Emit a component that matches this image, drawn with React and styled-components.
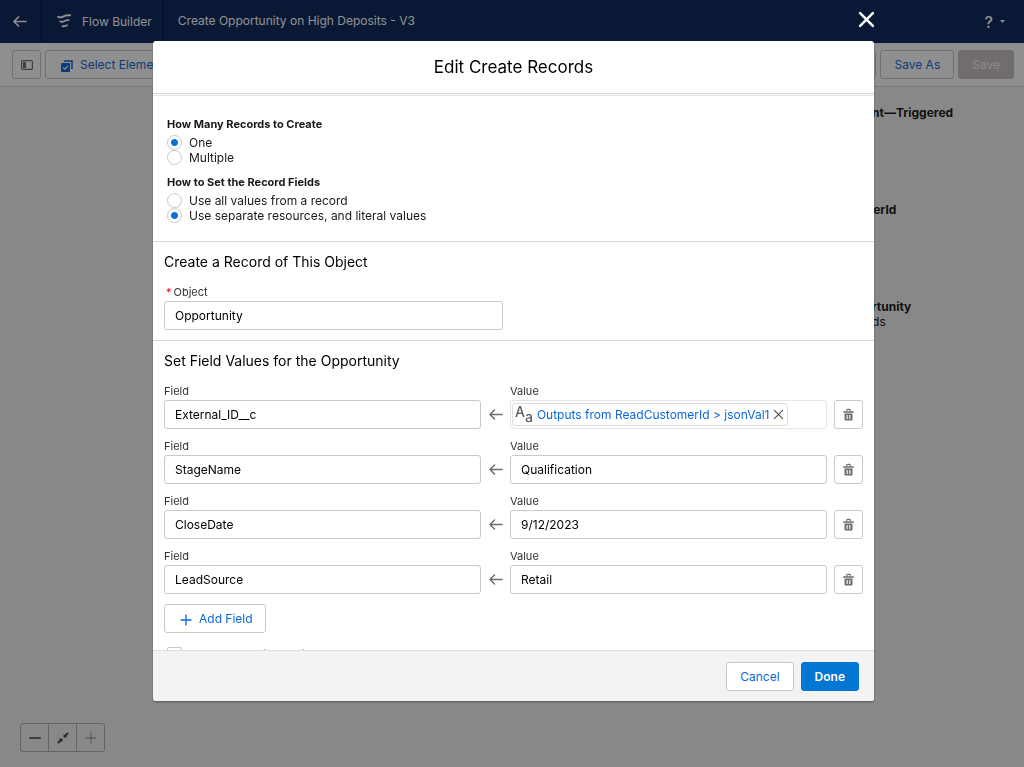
import { useState } from 'react';
import styled, { createGlobalStyle } from 'styled-components';

const GlobalStyle = createGlobalStyle`
  *, *::before, *::after {
    box-sizing: border-box;
  }

  body {
    margin: 0;
    font-family: Inter, 'Liberation Sans', sans-serif;
    font-size: 12px;
    color: #181818;
  }

  button, input {
    font: inherit;
    color: inherit;
  }
`;

const Page = styled.div`
  display: flex;
  flex-direction: column;
  height: 100vh;
  min-height: 480px;
  background-color: #f3f3f3;
`;

const TopBar = styled.header`
  display: flex;
  align-items: stretch;
  height: 43px;
  flex-shrink: 0;
  background-color: #0a285c;
  color: #ffffff;
  line-height: 42px;
`;

const BackLink = styled.a`
  display: flex;
  align-items: center;
  justify-content: center;
  width: 42px;
  padding-right: 2px;
  color: inherit;
  border-right: 1px solid #04112e;
`;

const Brand = styled.div`
  display: flex;
  align-items: center;
  gap: 10px;
  padding: 0 11px 0 15px;
  border-right: 1px solid #04112e;
`;

const FlowName = styled.h1`
  flex: 1;
  margin: 0;
  padding-left: 14px;
  font-size: 12px;
  font-weight: 400;
`;

const HelpButton = styled.button`
  display: flex;
  align-items: center;
  gap: 7px;
  margin-right: 19px;
  padding: 0;
  border: none;
  background: none;
  font-size: 16px;
  font-weight: 500;
`;

const Toolbar = styled.div`
  display: flex;
  align-items: center;
  gap: 4px;
  height: 44px;
  flex-shrink: 0;
  padding: 0 10px 0 12px;
  background-color: #ffffff;
  border-bottom: 1px solid #d8d8d8;
`;

const Spacer = styled.div`
  flex: 1;
`;

const Button = styled.button`
  display: inline-flex;
  align-items: center;
  justify-content: center;
  gap: 7px;
  height: 29px;
  padding: ${({ $withIcon }) => ($withIcon ? '0 12px 0 15px' : '0 13px')};
  border: 1px solid ${({ $brand }) => ($brand ? '#0176d3' : '#c9c9c9')};
  border-radius: 3px;
  background-color: ${({ $brand }) => ($brand ? '#0176d3' : '#ffffff')};
  color: ${({ $brand }) => ($brand ? '#ffffff' : '#0b68d8')};
  font-weight: ${({ $brand }) => ($brand ? 600 : 400)};
  white-space: nowrap;
  cursor: pointer;

  &:disabled {
    border-color: #c9c2c2;
    background-color: #c9c2c2;
    color: #f3f3f3;
    cursor: default;
  }
`;

const IconButton = styled.button`
  display: inline-flex;
  align-items: center;
  justify-content: center;
  width: 29px;
  height: 29px;
  padding: 0;
  border: 1px solid #c9c9c9;
  border-radius: 3px;
  background-color: #ffffff;
  color: #706e6b;
  cursor: pointer;
`;

const Canvas = styled.main`
  position: relative;
  flex: 1;
  overflow: hidden;
`;

const FlowNode = styled.div`
  position: absolute;
  left: 798px;
  top: ${({ $y }) => $y}px;
  line-height: 15px;
  white-space: nowrap;

  strong {
    display: block;
    font-weight: 700;
  }
`;

const ZoomControls = styled.div`
  position: absolute;
  left: 20px;
  bottom: 15px;
  display: flex;
  border: 1px solid #b0b0b0;
  border-radius: 3px;
`;

const ZoomButton = styled.button`
  display: flex;
  align-items: center;
  justify-content: center;
  width: 27px;
  height: 27px;
  padding: 0;
  border: none;
  background: none;
  color: #444444;

  & + & {
    width: 28px;
    border-left: 1px solid #b0b0b0;
  }

  &:disabled {
    color: #a8a8a8;
  }
`;

const Backdrop = styled.div`
  position: fixed;
  inset: 0;
  display: flex;
  padding: 41px 150px 66px 153px;
  background-color: rgba(8, 7, 7, 0.45);
`;

const Modal = styled.section`
  position: relative;
  display: flex;
  flex-direction: column;
  flex: 1;
  min-width: 0;
  border-radius: 3px;
  background-color: #ffffff;
  box-shadow: 0 1px 2px rgba(0, 0, 0, 0.4);
`;

const CloseButton = styled.button`
  position: absolute;
  top: -30px;
  right: -1px;
  display: flex;
  padding: 0;
  border: none;
  background: none;
  color: #ffffff;
  cursor: pointer;
`;

const ModalHeader = styled.header`
  flex-shrink: 0;
  padding: 14px 16px;
  border-bottom: 1px solid #d0d0d0;
  text-align: center;
`;

const ModalTitle = styled.h2`
  margin: 0;
  color: #000000;
  font-size: 17px;
  line-height: 24px;
  font-weight: 400;
`;

const ModalBody = styled.div`
  flex: 1;
  min-height: 0;
  margin-top: 1px;
  border-top: 1px solid #e5e5e5;
  overflow-y: auto;
  scrollbar-width: none;
`;

const ModalFooter = styled.footer`
  display: flex;
  justify-content: flex-end;
  gap: 7px;
  flex-shrink: 0;
  padding: 11px 15px 10px;
  border-top: 1px solid #dddddd;
  border-radius: 0 0 3px 3px;
  background-color: #f3f3f3;
`;

const Options = styled.div`
  display: flex;
  flex-direction: column;
  gap: 9px;
  padding: 20px 14px 18px;
`;

const RadioGroup = styled.fieldset`
  margin: 0;
  padding: 0;
  border: none;

  legend {
    margin-bottom: 3px;
    padding: 0;
    line-height: 16px;
    font-size: 11px;
    font-weight: 700;
  }
`;

const RadioLabel = styled.label`
  display: flex;
  align-items: center;
  gap: 7px;
  height: 15px;
`;

const Radio = styled.input`
  appearance: none;
  width: 15px;
  height: 15px;
  margin: 0;
  border: 1px solid #c9c9c9;
  border-radius: 50%;
  background-color: #ffffff;

  &:checked {
    background-image: radial-gradient(circle, #0b70d8 0 3px, transparent 4px);
  }
`;

const Section = styled.section`
  padding: 10px 11px;
  border-top: 1px solid #d8d8d8;
`;

const SectionTitle = styled.h3`
  margin: 0 0 12px;
  color: #000000;
  font-size: 14px;
  line-height: 20px;
  font-weight: 400;
`;

const Field = styled.div`
  min-width: 0;
  width: ${({ $width }) => $width || 'auto'};
`;

const FieldLabel = styled.label`
  display: block;
  font-size: 11px;
  line-height: 17px;
  color: #333333;
`;

const Required = styled.abbr`
  margin: 0 2px;
  color: #ea001e;
`;

const TextInput = styled.input`
  display: block;
  width: 100%;
  height: 29px;
  padding: 0 10px;
  border: 1px solid #c9c9c9;
  border-radius: 3px;
  background-color: #ffffff;
  color: #000000;
`;

const FieldRows = styled.div`
  display: flex;
  flex-direction: column;
  gap: 9px;
  margin-bottom: 10px;
`;

const FieldRow = styled.div`
  display: grid;
  grid-template-columns: 1fr 29px 1fr 36px;
  align-items: end;

  ${IconButton} {
    justify-self: end;
  }
`;

const ArrowCell = styled.div`
  display: flex;
  align-items: center;
  justify-content: center;
  height: 29px;
  color: #706e6b;
`;

const PillBox = styled.div`
  display: flex;
  align-items: center;
  height: 29px;
  padding: 0 1px;
  border: 1px solid #e5e5e5;
  border-radius: 3px;
`;

const Pill = styled.span`
  display: inline-flex;
  align-items: center;
  height: 23px;
  padding: 0 3px 0 2px;
  border: 1px solid #dddddd;
  border-radius: 3px;
  white-space: nowrap;

  a {
    margin: 0 4px;
    color: #0b68d8;
    text-decoration: none;
  }

  button {
    display: flex;
    padding: 0;
    border: none;
    background: none;
    color: #555555;
  }
`;

const TypeIcon = styled.span`
  display: inline-flex;
  height: 19px;
  color: #5c5c5c;
  font-size: 14px;
  font-weight: 500;
  line-height: 14px;

  span + span {
    align-self: flex-end;
  }
`;

const CheckboxLabel = styled.label`
  display: flex;
  align-items: center;
  gap: 7px;
  height: 16px;
  margin-top: 13px;
  padding-left: 3px;
`;

const Checkbox = styled.input`
  appearance: none;
  width: 15px;
  height: 15px;
  margin: 0;
  border: 1px solid #c9c9c9;
  border-radius: 2px;
  background-color: #ffffff;
`;

const ArrowLeftIcon = ({ size = 14, strokeWidth = 1.5 }) => (
  <svg width={size} height={size} viewBox="0 0 14 14" fill="none" stroke="currentColor" strokeWidth={strokeWidth} strokeLinecap="round" strokeLinejoin="round">
    <path d="M13 6.500H1.200M5.500 2L1 6.500 5.500 11" />
  </svg>
);

const CrossIcon = ({ size, strokeWidth }) => (
  <svg width={size} height={size} viewBox="0 0 16 16" fill="none" stroke="currentColor" strokeWidth={strokeWidth} strokeLinecap="round">
    <path d="M2 2l12 12M14 2L2 14" />
  </svg>
);

const FlowIcon = () => (
  <svg width="15" height="15" viewBox="0 0 15 15" fill="none" stroke="currentColor" strokeLinecap="round">
    <path d="M1.200 2.800c2.200 1.200 4.200.400 6-.600 1.800-1 3.700-1.200 5.900-.900" strokeWidth="1.900" />
    <path d="M3.200 7.500c1.500.700 3 .200 4.300-.500 1.300-.800 2.600-1 4.200-.800" strokeWidth="1.800" />
    <path d="M5.400 12.300c.9.400 1.700 0 2.500-.400.700-.400 1.300-.500 2.100-.400" strokeWidth="1.800" />
  </svg>
);

const TrashIcon = () => (
  <svg width="11" height="13" viewBox="0 0 11 13" fill="none" stroke="currentColor">
    <path d="M.7 4h9.600" strokeWidth="1.400" strokeLinecap="round" />
    <path d="M3.700 3.500V2.300c0-.6.300-.9.900-.9h1.800c.6 0 .9.300.9.900v1.200" strokeWidth="1.100" />
    <path d="M1.500 5.500h8v5.900c0 .7-.4 1.100-1.100 1.100H2.600c-.7 0-1.100-.4-1.100-1.100zM3.600 7v4h1.100V7zm2.700 0v4h1.100V7z" fill="currentColor" fillRule="evenodd" stroke="none" />
  </svg>
);

const PanelIcon = () => (
  <svg width="12" height="10" viewBox="0 0 12 10">
    <rect x=".6" y=".6" width="10.800" height="8.800" rx="1" fill="none" stroke="currentColor" strokeWidth="1.200" />
    <rect x="2" y="2" width="3" height="6" fill="currentColor" />
  </svg>
);

const SelectIcon = () => (
  <svg width="12" height="14" viewBox="0 0 12 14">
    <path d="M3 3h8v8" fill="none" stroke="currentColor" strokeWidth="1.500" />
    <rect x="0" y="5" width="9" height="9" rx="1" fill="currentColor" />
    <path d="M2.200 9.500l1.700 1.700 3-3.400" fill="none" stroke="#ffffff" strokeWidth="1.200" />
  </svg>
);

const PlusIcon = () => (
  <svg width="12" height="14" viewBox="0 0 12 14" fill="none" stroke="currentColor" strokeWidth="1.300" strokeLinecap="round">
    <path d="M6 3v10M1 8h10" />
  </svg>
);

const ZoomInIcon = () => (
  <svg width="12" height="12" viewBox="0 0 12 12" stroke="currentColor" strokeWidth="1.300" strokeLinecap="round">
    <path d="M6 1v10M1 6h10" />
  </svg>
);

const ZoomOutIcon = () => (
  <svg width="12" height="12" viewBox="0 0 12 12" stroke="currentColor" strokeWidth="1.500" strokeLinecap="round">
    <path d="M.7 6h10.600" />
  </svg>
);

const FitIcon = () => (
  <svg width="12" height="12" viewBox="0 0 12 12" fill="currentColor">
    <path d="M6.600 1.800v3.600h3.600L9.100 4.300 11.700 1.700 10.300.3 7.700 2.900z" />
    <path d="M1.800 6.600h3.600v3.600L4.300 9.100 1.700 11.700.3 10.300 2.900 7.700z" />
  </svg>
);

const CaretIcon = () => (
  <svg width="5" height="3" viewBox="0 0 5 3" fill="currentColor">
    <path d="M0 0h5L2.500 3z" />
  </svg>
);

const initialRows = [
  { id: 'row1', field: 'External_ID__c', resource: 'Outputs from ReadCustomerId > jsonVal1' },
  { id: 'row2', field: 'StageName', value: 'Qualification' },
  { id: 'row3', field: 'CloseDate', value: '9/12/2023' },
  { id: 'row4', field: 'LeadSource', value: 'Retail' },
];

function RadioOptions({ name, legend, options, defaultValue }) {
  return (
    <RadioGroup>
      <legend>{legend}</legend>
      {options.map((option) => (
        <RadioLabel key={option}>
          <Radio type="radio" name={name} defaultChecked={option === defaultValue} />
          {option}
        </RadioLabel>
      ))}
    </RadioGroup>
  );
}

function ResourcePill({ text, onClear }) {
  return (
    <PillBox>
      <Pill>
        <TypeIcon aria-hidden="true">
          <span>A</span>
          <span>a</span>
        </TypeIcon>
        <a href="#resource">{text}</a>
        <button type="button" aria-label="Remove resource" onClick={onClear}>
          <CrossIcon size={11} strokeWidth={1.8} />
        </button>
      </Pill>
    </PillBox>
  );
}

function AssignmentRow({ row, onClear, onDelete }) {
  return (
    <FieldRow>
      <Field>
        <FieldLabel htmlFor={`${row.id}-field`}>Field</FieldLabel>
        <TextInput id={`${row.id}-field`} defaultValue={row.field} />
      </Field>
      <ArrowCell>
        <ArrowLeftIcon />
      </ArrowCell>
      <Field>
        <FieldLabel as={row.resource ? 'div' : 'label'} htmlFor={row.resource ? undefined : `${row.id}-value`}>
          Value
        </FieldLabel>
        {row.resource ? (
          <ResourcePill text={row.resource} onClear={() => onClear(row.id)} />
        ) : (
          <TextInput id={`${row.id}-value`} defaultValue={row.value} />
        )}
      </Field>
      <IconButton type="button" aria-label="Delete" onClick={() => onDelete(row.id)}>
        <TrashIcon />
      </IconButton>
    </FieldRow>
  );
}

function EditRecordsModal() {
  const [rows, setRows] = useState(initialRows);

  const addRow = () => {
    setRows([...rows, { id: `row${Date.now()}`, field: '', value: '' }]);
  };

  const deleteRow = (id) => {
    setRows(rows.filter((row) => row.id !== id));
  };

  const clearResource = (id) => {
    setRows(rows.map((row) => (row.id === id ? { ...row, resource: null } : row)));
  };

  return (
    <Modal role="dialog" aria-modal="true" aria-labelledby="modal-title">
      <CloseButton type="button" aria-label="Close">
        <CrossIcon size={17} strokeWidth={2.4} />
      </CloseButton>
      <ModalHeader>
        <ModalTitle id="modal-title">Edit Create Records</ModalTitle>
      </ModalHeader>
      <ModalBody>
        <Options>
          <RadioOptions
            name="count"
            legend="How Many Records to Create"
            options={['One', 'Multiple']}
            defaultValue="One"
          />
          <RadioOptions
            name="source"
            legend="How to Set the Record Fields"
            options={['Use all values from a record', 'Use separate resources, and literal values']}
            defaultValue="Use separate resources, and literal values"
          />
        </Options>
        <Section>
          <SectionTitle>Create a Record of This Object</SectionTitle>
          <Field $width="48.5%">
            <FieldLabel htmlFor="object">
              <Required>*</Required>
              Object
            </FieldLabel>
            <TextInput id="object" defaultValue="Opportunity" />
          </Field>
        </Section>
        <Section>
          <SectionTitle>Set Field Values for the Opportunity</SectionTitle>
          <FieldRows>
            {rows.map((row) => (
              <AssignmentRow key={row.id} row={row} onClear={clearResource} onDelete={deleteRow} />
            ))}
          </FieldRows>
          <Button type="button" $withIcon onClick={addRow}>
            <PlusIcon />
            Add Field
          </Button>
          <CheckboxLabel>
            <Checkbox type="checkbox" />
            Manually assign variables
          </CheckboxLabel>
        </Section>
      </ModalBody>
      <ModalFooter>
        <Button type="button">Cancel</Button>
        <Button type="button" $brand>
          Done
        </Button>
      </ModalFooter>
    </Modal>
  );
}

function App() {
  return (
    <>
      <GlobalStyle />
      <Page>
        <TopBar>
          <BackLink href="#back" aria-label="Back">
            <ArrowLeftIcon strokeWidth={1.7} />
          </BackLink>
          <Brand>
            <FlowIcon />
            Flow Builder
          </Brand>
          <FlowName>Create Opportunity on High Deposits - V3</FlowName>
          <HelpButton type="button" aria-label="Help">
            ?
            <CaretIcon />
          </HelpButton>
        </TopBar>
        <Toolbar>
          <IconButton type="button" aria-label="Toggle toolbox">
            <PanelIcon />
          </IconButton>
          <Button type="button" $withIcon>
            <SelectIcon />
            Select Elements
          </Button>
          <Spacer />
          <Button type="button">Debug</Button>
          <Button type="button">Save As</Button>
          <Button type="button" disabled>
            Save
          </Button>
        </Toolbar>
        <Canvas>
          <FlowNode $y={18}>
            <strong>Platform Event—Triggered</strong>
          </FlowNode>
          <FlowNode $y={115}>
            <strong>ReadCustomerId</strong>
          </FlowNode>
          <FlowNode $y={212}>
            <strong>Create Opportunity</strong>
            Create Records
          </FlowNode>
          <ZoomControls>
            <ZoomButton type="button" aria-label="Zoom out">
              <ZoomOutIcon />
            </ZoomButton>
            <ZoomButton type="button" aria-label="Fit to view">
              <FitIcon />
            </ZoomButton>
            <ZoomButton type="button" aria-label="Zoom in" disabled>
              <ZoomInIcon />
            </ZoomButton>
          </ZoomControls>
        </Canvas>
      </Page>
      <Backdrop>
        <EditRecordsModal />
      </Backdrop>
    </>
  );
}

export default App;
